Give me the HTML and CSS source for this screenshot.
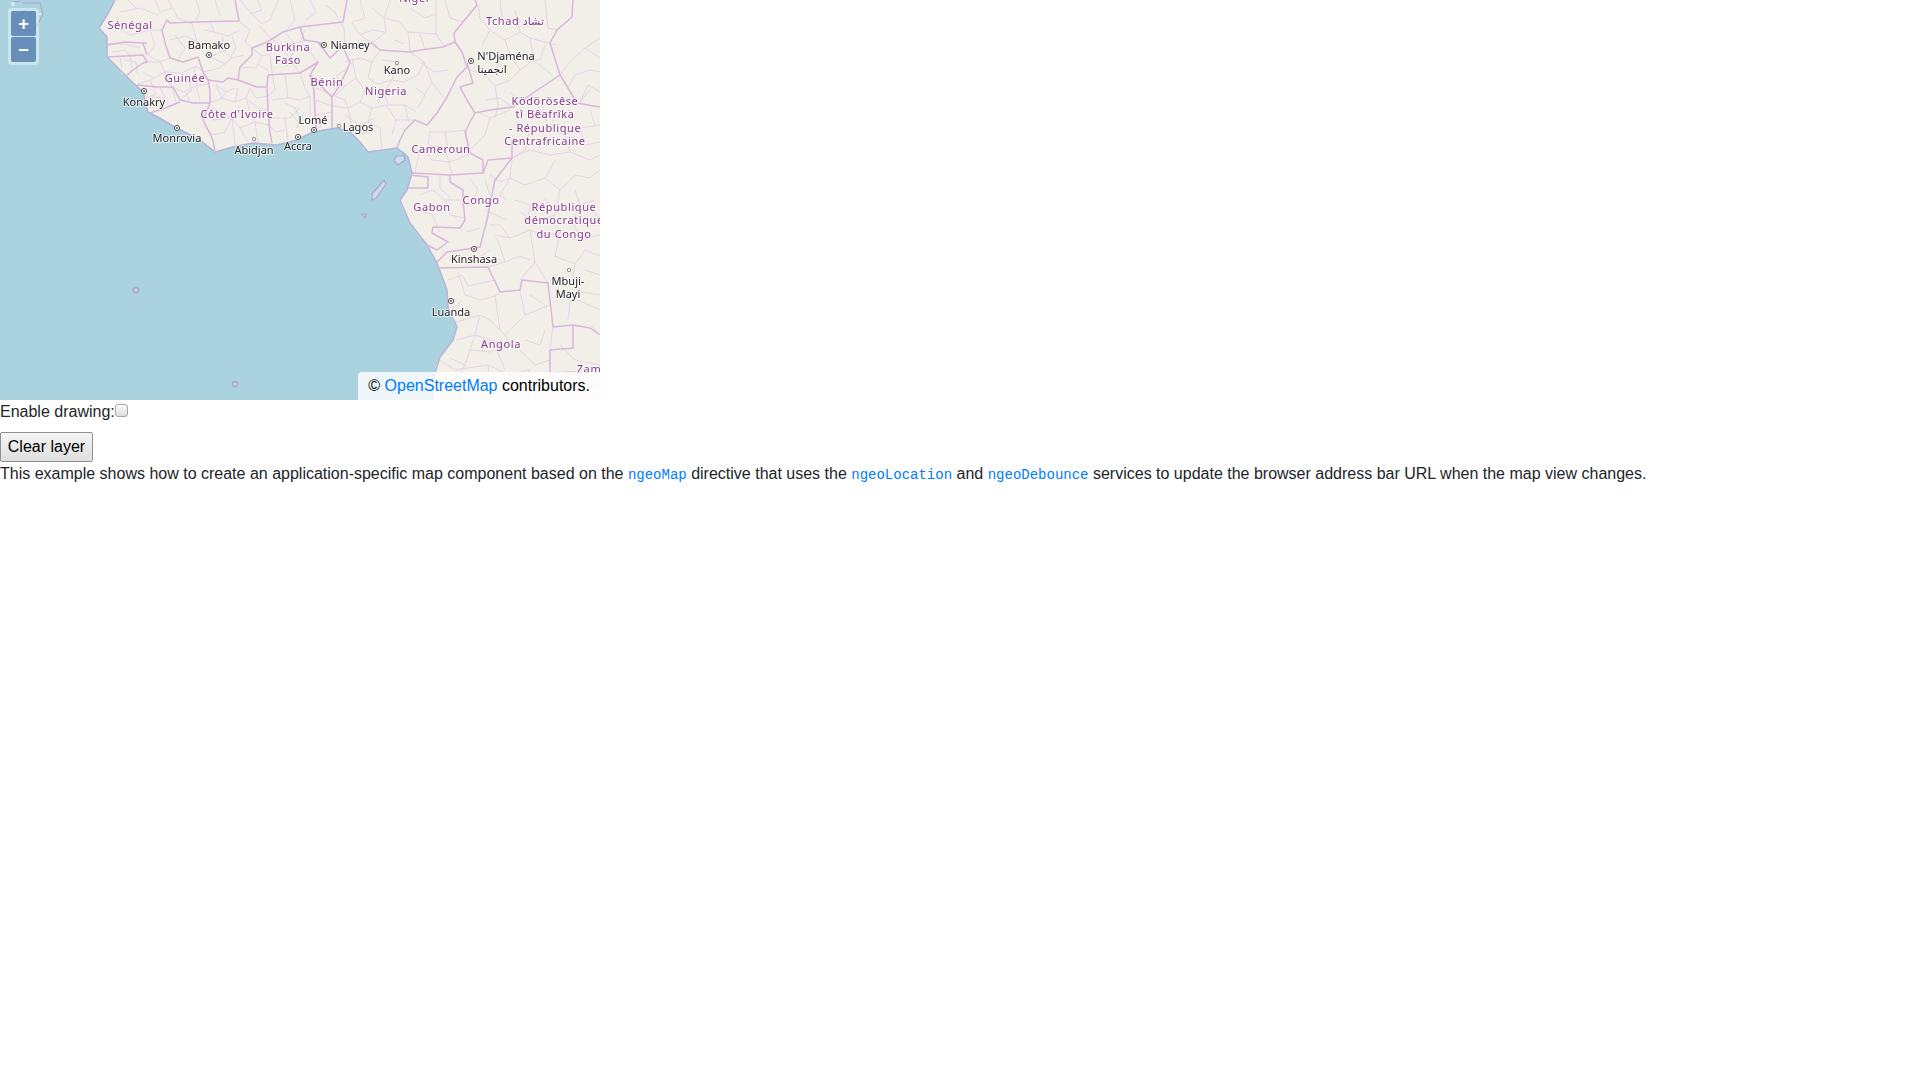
FILE: index.html
```html
<!DOCTYPE html>
<html lang="fr">
<head>
<meta charset="utf-8">
<title>Permalink example</title>
<link rel="stylesheet" href="styles.css">
</head>
<body>
<div class="map">
  <svg class="map-canvas" width="600" height="400" viewBox="0 0 600 400" xmlns="http://www.w3.org/2000/svg">
    <rect class="sea" width="600" height="400"/>
    <path class="land" d="M115,0 L110,10 L104,20 L99,28 L107,37 L107,46 L107,57 L113,64 L117,67 L122,74 L128,78 L136,85 L143,92 L146,102 L148,112 L160,117 L170,124 L177,128 L190,134 L200,140 L208,147 L215,152 L224,149 L233,147 L243,145 L253,143 L265,144 L277,145 L287,143 L297,140 L305,135 L313,132 L325,129 L337,128 L350,132 L356,137 L360,142 L364,149 L368,152 L380,151 L397,148 L404,152 L408,157 L410,165 L412,173 L409,182 L407,190 L400,200 L402,207 L410,223 L418,235 L427,245 L433,255 L437,263 L442,277 L447,290 L448,307 L452,317 L457,327 L455,335 L453,340 L446,349 L440,357 L436,366 L435,373 L432,400 L600,400 L600,0 Z"/>
    <path class="coast-halo" d="M115,0 L110,10 L104,20 L99,28 L107,37 L107,57 L117,67 L128,78 L143,92 L148,112 L177,128 L200,140 L215,152 L233,147 L253,143 L277,145 L297,140 L313,132 L337,128 L350,132 L360,142 L368,152 L397,148 L408,157 L412,173 L407,190 L400,200 L410,223 L427,245 L437,263 L447,290 L448,307 L457,327 L453,340 L440,357 L435,373 L432,400"/>

    <g class="minor">
      <path d="M168,0 L178,18 M120,12 L140,8 L158,15 M128,0 L136,8 M115,26 L130,35 L150,30 L162,30"/>
      <path d="M196,0 L200,12 L196,20 M210,22 L214,32 L228,36 L240,30 M170,40 L186,36 L197,42 L204,54 M204,30 L214,32 M222,36 L226,50 L212,56 L204,55"/>
      <path d="M240,0 L252,14 L262,24 L270,20 L278,0 M240,22 L250,30 L245,42 L252,48 M260,26 L270,38 M290,0 L295,20 L285,32"/>
      <path d="M210,57 L225,64 L232,58 L222,50 M203,72 L220,68 L232,58 M150,30 L155,45 L148,55 L160,62 L170,58"/>
      <path d="M145,62 L160,62 L165,72 L150,80 L138,84 M165,72 L182,73 L196,66 L204,72 M143,73 L155,78 M165,72 L172,87 M188,80 L192,90 L180,100"/>
      <path d="M108,44 L125,44 L140,48 M112,52 L125,50 L130,56 L143,55 M120,57 L122,68 M130,56 L132,68"/>
      <path d="M173,87 L184,92 L196,86 L208,84 M186,92 L190,102 M160,88 L165,98 L158,110 M150,97 L165,98"/>
      <path d="M210,103 L222,98 L235,102 L246,98 L258,108 L268,110 M222,98 L216,85 M235,102 L238,88 M246,98 L250,88 M212,120 L232,118 L240,128 L255,122 L268,125 M232,118 L235,145 M255,122 L258,142 M204,125 L213,135 L225,132 L232,118"/>
      <path d="M272,72 L275,90 L268,96 M285,75 L288,98 L300,100 L310,96 M272,100 L288,98 M270,118 L290,118 L300,108 M300,73 L305,88 L310,96 L310,125 M285,118 L288,140"/>
      <path d="M252,48 L262,56 L270,54 L272,72 M262,56 L256,68 L240,67 M285,32 L295,45 L290,60 L300,73 M305,30 L300,42 L310,52 L318,62 M318,62 L310,67"/>
      <path d="M344,28 L345,48 M352,22 L360,35 L372,43 M390,0 L384,18 L400,22 L408,32 L436,34 L436,0 M384,18 L386,32 L372,43 M408,32 L410,52 M436,34 L444,46"/>
      <path d="M345,62 L360,58 L372,62 L380,50 M352,58 L356,78 L345,86 L335,96 M372,62 L368,78 L378,84 L392,80 L404,82 M392,80 L396,62 L382,60 M404,82 L418,75 L424,62 L410,52 M420,62 L434,72 L448,70 M424,62 L432,82 L444,98"/>
      <path d="M332,106 L348,108 L360,102 L372,108 L386,105 L405,105 L416,112 M348,108 L352,128 M372,108 L368,122 L380,128 L382,150 M386,105 L396,120 L392,135 M405,105 L408,120 M360,102 L365,90 L384,92 L392,80 M335,96 L345,100 L348,108 M360,125 L375,118 M345,115 L360,125 M355,135 L370,132"/>
      <path d="M430,132 L450,132 L466,130 M430,132 L428,145 L445,148 M445,132 L448,148 M466,130 L468,150 M420,145 L432,160 L450,162 L470,154 M445,148 L452,175 M420,150 L415,172"/>
      <path d="M482,45 L490,30 L505,40 L520,32 L530,38 L556,45 M490,30 L480,18 L478,5 M520,32 L515,10 M530,38 L534,60 L520,70 L510,80 L495,86 M470,70 L485,75 L495,86 L498,105 M485,100 L500,98 L512,107 M534,60 L552,75 M500,0 L502,20 L520,20 M545,0 L548,28 L557,30"/>
      <path d="M478,112 L490,118 L510,110 M490,118 L485,135 L470,150 M515,122 L530,130 L550,128 M530,130 L525,150 L512,158 M550,128 L565,135 L580,128 L600,125 M565,135 L570,152 L590,160 L600,155 M580,102 L588,85 L600,92 M560,75 L570,62 L585,48 L600,58 M585,48 L600,38 M580,102 L590,90"/>
      <path d="M512,158 L530,150 L550,155 L570,152 M512,160 L510,178 L525,185 L545,178 L555,160 M545,178 L560,190 L575,175 L590,178 L600,170 M510,178 L500,195 L507,200 M560,190 L555,215 L535,222 M490,175 L500,182 L510,178"/>
      <path d="M420,195 L433,190 L445,200 L450,215 L464,218 M415,210 L432,214 L440,232 M445,200 L463,200 M468,202 L482,198 M495,235 L510,238 L530,230 L545,236 L560,232 L575,240 L600,235 M530,230 L535,262 L520,280 M560,232 L555,256 L575,264 L585,250 L600,256 M575,264 L572,280 L582,292 L600,295 M497,238 L505,262 L488,267 M535,262 L548,283 M510,238 L500,225"/>
      <path d="M580,205 L572,222 L580,235 M520,212 L535,222 M590,205 L600,222 M485,210 L507,220 M467,232 L480,228"/>
      <path d="M448,280 L462,275 L468,286 L495,280 L500,292 M458,272 L465,295 L480,300 L495,296 L500,292 M462,300 L450,312 L456,322 L480,315 L490,320 L505,335 L510,345 L520,345 M495,296 L500,330 M520,290 L525,315 L550,305 M525,315 L505,335 M480,315 L475,335 L505,345 M456,340 L475,335 L470,350 L490,352 L510,345 M470,350 L465,365 L450,358 M440,360 L455,370 L488,365 L490,385 L505,400 M520,350 L535,365 L550,360 M488,365 L510,375 L530,370 L520,390 L530,400 M550,350 L553,327 M590,325 L600,335 M440,400 L455,380 L465,365"/>
      <path d="M178,18 L192,24 M155,0 L160,12 L172,8 M215,0 L220,16 M258,0 L262,10 L250,14 M310,0 L316,12 L306,20 M325,5 L335,12 L340,22 M360,0 L365,18 L352,22 M372,8 L384,18 M410,8 L425,18 L436,14 M445,0 L450,18 L463,22"/>
      <path d="M175,35 L185,48 L178,60 M192,24 L197,42 M232,36 L236,48 L230,58 M244,55 L232,58 M270,38 L282,46 L290,60 M282,46 L300,42 M258,64 L268,70 M276,56 L286,66 L296,60"/>
      <path d="M124,60 L136,62 L138,75 M150,80 L156,94 L146,98 M172,87 L176,102 M196,86 L200,100 M196,66 L192,80 M204,72 L196,86 M216,85 L226,92 L235,88 M226,92 L222,98 M250,88 L256,98 L268,96 M240,128 L248,142 M212,108 L222,112 L232,118 M246,98 L250,112 L255,122 M268,125 L276,132 L285,130"/>
      <path d="M316,88 L326,92 M316,100 L332,106 M316,115 L332,112 M320,128 L324,115 M345,70 L336,76 L345,86 M356,78 L365,90 M384,92 L388,104 M416,88 L425,95 L418,108 M432,82 L424,95 M395,120 L408,120 L415,120 M360,35 L372,30 L384,32 M395,40 L404,44 M420,34 L425,50 M340,22 L344,28"/>
      <path d="M490,50 L500,60 L495,72 M505,40 L510,55 L520,70 M545,45 L540,60 L534,60 M498,105 L495,118 M510,92 L520,100 M532,95 L540,110 L550,128 M568,88 L575,75 L590,70 L600,72 M550,128 L556,115 L570,110 M590,110 L595,125 M580,128 L585,145 L600,142 M440,175 L440,188 L450,198 M470,178 L478,190 L470,205 M485,180 L490,195"/>
      <path d="M515,200 L530,205 L528,220 M545,198 L550,208 M575,190 L580,205 L595,200 M490,225 L500,225 M465,262 L478,258 L490,250 M505,262 L520,256 L530,260 M585,270 L600,275 M555,290 L570,300 L568,320 M578,300 L600,310 M530,295 L545,305 M525,340 L540,345 L545,330 M560,345 L575,360 L600,365 M558,380 L575,392 L600,385 M470,385 L490,385 M540,378 L535,400 M505,370 L495,345"/>
    </g>

    <g class="major">
      <path d="M235,0 L239,21 L195,22 L170,23 L167,20 L162,30 L165,43 L170,58 L183,62 L198,57 L203,72 L208,80 L210,90 L210,103 L203,120 L208,130 L213,140 L215,152"/>
      <path d="M208,80 L223,82 L228,78 L238,80 L240,67 L252,55 L252,48 L267,42 L283,32 L300,27 L343,22 L347,0"/>
      <path d="M238,80 L257,87 L267,87 L268,110 L270,133 L272,143 M268,75 L267,87 M268,75 L300,73 L310,67 L318,62 L310,75 L314,90 L316,132 M300,27 L304,40 L318,42 L330,58 L342,47 M318,42 L324,45"/>
      <path d="M310,75 L332,97 L332,128 M332,97 L340,85 L350,63 L343,47 L356,47 L372,43 L380,50 L410,52 L420,50 L443,47 L455,42 L454,33 L463,22 L477,5 L475,0"/>
      <path d="M455,42 L462,52 L467,67 L457,77 L447,97 L437,113 L427,125 L415,120 L405,130 L400,140 L397,148"/>
      <path d="M467,63 L473,83 L460,87 L467,100 L475,113 L470,122 L465,132 L470,153 L483,160 L483,173 L450,175 L412,173 M483,173 L488,160 L512,158 L512,140 M475,113 L490,110 L513,107 L533,93 L560,75 L568,88 L577,103 L600,107 M573,0 L572,17 L557,30 L550,43 L560,75"/>
      <path d="M410,175 L428,177 L428,188 L408,188 M450,175 L450,182 L463,190 L463,200 L465,220 L460,228 L433,227 L432,233 L448,242 L437,250 L427,245 M512,158 L495,180 L487,220 L480,247 L460,250 L447,252 L437,262 M438,268 L488,267 L500,292 L520,290 L522,280 L548,283 L553,327 L573,325 L573,348 L550,350 L550,373 L575,372 L580,380 M573,325 L590,328 L600,335"/>
      <path d="M143,43 L125,42 L107,45 M107,57 L125,56 L143,55 L147,62 L143,63 L133,70 L125,77 M147,43 L143,43 L147,55 M137,85 L157,87 L173,87 L180,100 L193,103 L210,103 M150,113 L165,108 L180,102"/>
    </g>

    <path class="river" d="M285,103 L295,108 L300,118 L297,128 M304,112 L300,122 M290,112 L298,122"/>
    <path class="isle" d="M396,156 L404,156 L405,160 L398,165 L394,161 Z"/>
    <path class="isle" d="M384,180 L386,184 L376,198 L372,200 L372,194 Z"/>
    <path class="isle" d="M362,214 L366,214 L365,218 Z"/>
    <circle class="dot-ring" cx="136" cy="290" r="2.6"/>
    <circle class="dot-ring" cx="235" cy="384" r="2.6"/>
    <path class="maritime" d="M12,2 L20,1 M22,3 L40,3 L43,14 L38,24 L34,30 L18,31 L17,18 L28,8"/>
    <circle class="isle-spot" cx="13" cy="4" r="2"/>
    <circle class="isle-spot" cx="40" cy="14" r="1.5"/>

    <g class="cities">
      <circle class="city" cx="209" cy="55" r="2.6"/><circle class="core" cx="209" cy="55" r="0.9"/>
      <circle class="city" cx="144" cy="91" r="2.6"/><circle class="core" cx="144" cy="91" r="0.9"/>
      <circle class="city" cx="177" cy="128" r="2.6"/><circle class="core" cx="177" cy="128" r="0.9"/>
      <circle class="town" cx="254" cy="139" r="1.7"/>
      <circle class="city" cx="298" cy="137" r="2.6"/><circle class="core" cx="298" cy="137" r="0.9"/>
      <circle class="city" cx="314" cy="130" r="2.6"/><circle class="core" cx="314" cy="130" r="0.9"/>
      <circle class="town" cx="339" cy="126" r="1.7"/>
      <circle class="city" cx="324" cy="45" r="2.6"/><circle class="core" cx="324" cy="45" r="0.9"/>
      <circle class="town" cx="397" cy="63" r="1.7"/>
      <circle class="city" cx="471" cy="61" r="2.6"/><circle class="core" cx="471" cy="61" r="0.9"/>
      <circle class="city" cx="474" cy="249" r="2.6"/><circle class="core" cx="474" cy="249" r="0.9"/>
      <circle class="town" cx="569" cy="270" r="1.7"/>
      <circle class="city" cx="451" cy="301" r="2.6"/><circle class="core" cx="451" cy="301" r="0.9"/>
    </g>

    <g class="country">
      <text x="130" y="29">Sénégal</text>
      <text x="288" y="51">Burkina</text>
      <text x="288" y="64">Faso</text>
      <text x="185" y="82">Guinée</text>
      <text x="237" y="118">Côte d'Ivoire</text>
      <text x="327" y="86">Bénin</text>
      <text x="386" y="95">Nigeria</text>
      <text x="415" y="2">Niger</text>
      <text x="515" y="25">Tchad تشاد</text>
      <text x="545" y="105">Ködörösêse</text>
      <text x="545" y="118">tî Bêafrîka</text>
      <text x="545" y="132">- République</text>
      <text x="545" y="145">Centrafricaine</text>
      <text x="441" y="153">Cameroun</text>
      <text x="481" y="204">Congo</text>
      <text x="432" y="211">Gabon</text>
      <text x="564" y="211">République</text>
      <text x="564" y="224">démocratique</text>
      <text x="564" y="238">du Congo</text>
      <text x="501" y="348">Angola</text>
      <text x="589" y="373">Zam</text>
    </g>
    <g class="place">
      <text x="209" y="49">Bamako</text>
      <text x="144" y="106">Konakry</text>
      <text x="177" y="142">Monrovia</text>
      <text x="254" y="154">Abidjan</text>
      <text x="298" y="150">Accra</text>
      <text x="313" y="124">Lomé</text>
      <text x="358" y="131">Lagos</text>
      <text x="350" y="49">Niamey</text>
      <text x="397" y="74">Kano</text>
      <text x="506" y="60">N'Djaména</text>
      <text x="492" y="73">انجمينا</text>
      <text x="474" y="263">Kinshasa</text>
      <text x="568" y="285">Mbuji-</text>
      <text x="568" y="298">Mayi</text>
      <text x="451" y="316">Luanda</text>
    </g>
  </svg>
  <div class="zoom-panel">
    <button class="zoom-btn" type="button">+</button>
    <button class="zoom-btn" type="button">−</button>
  </div>
  <div class="attribution">© <a href="#">OpenStreetMap</a> contributors.</div>
</div>
<label class="draw-label" for="draw">Enable drawing:<input class="draw-check" id="draw" type="checkbox"></label>
<button class="clear-btn" type="button">Clear layer</button>
<p class="desc">This example shows how to create an application-specific map component based on the <a href="#"><code>ngeoMap</code></a> directive that uses the <a href="#"><code>ngeoLocation</code></a> and <a href="#"><code>ngeoDebounce</code></a> services to update the browser address bar URL when the map view changes.</p>
</body>
</html>
```
FILE: styles.css
```css
* { box-sizing: border-box; }
html, body { margin: 0; padding: 0; background: #fff; }
body {
  font-family: "Liberation Sans", Arial, sans-serif;
  font-size: 16px;
  line-height: 1.5;
  color: #212529;
}
a { color: #007bff; text-decoration: none; }
.map { position: relative; width: 600px; height: 400px; overflow: hidden; background: #f2efe9; }
.map-canvas { display: block; filter: blur(0.4px); }
.sea { fill: #aad3df; }
.land { fill: #f2efe9; }
.coast-halo { fill: none; stroke: #b7b2da; stroke-width: 1.5; stroke-linejoin: round; }
.minor path { fill: none; stroke: #e6d3e6; stroke-width: 1; stroke-linejoin: round; }
.major path { fill: none; stroke: #d9b6dc; stroke-width: 1.5; stroke-linejoin: round; }
.river { fill: none; stroke: #bcdbe8; stroke-width: 0.9; }
.isle { fill: #cfdde8; stroke: #a9a6d4; stroke-width: 1.2; }
.dot-ring { fill: #c8d4e4; stroke: #aba4d2; stroke-width: 1.5; }
.maritime { fill: none; stroke: #b09ccf; stroke-width: 0.9; }
.isle-spot { fill: #dbe9ea; }
.city { fill: #fff; stroke: #555; stroke-width: 1; }
.core { fill: #444; }
.town { fill: #fff; stroke: #777; stroke-width: 0.8; }
.country text, .place text {
  font-family: "Noto Sans", "DejaVu Sans", sans-serif;
  font-size: 11px;
  text-anchor: middle;
  paint-order: stroke;
  stroke: rgba(255, 255, 255, 0.7);
  stroke-width: 2px;
  stroke-linejoin: round;
}
.country text { fill: #84398a; letter-spacing: 0.6px; }
.place text { fill: #222; }
.zoom-panel {
  position: absolute;
  top: 8px;
  left: 8px;
  padding: 3px;
  border-radius: 4px;
  background: rgba(255, 255, 255, 0.4);
  display: flex;
  flex-direction: column;
  gap: 1px;
}
.zoom-btn {
  display: block;
  width: 25px;
  height: 25px;
  margin: 0;
  padding: 0;
  border: 0;
  border-radius: 2px;
  background: rgba(0, 60, 136, 0.5);
  color: #fff;
  font-family: "Liberation Sans", Arial, sans-serif;
  font-size: 18.24px;
  font-weight: 700;
  line-height: 25px;
  text-align: center;
}
.attribution {
  position: absolute;
  right: 0;
  bottom: 0;
  height: 28px;
  padding: 2px 10px;
  border-radius: 4px 0 0 0;
  background: rgba(255, 255, 255, 0.8);
  color: #000;
  line-height: 24px;
}
.draw-label { display: inline-block; margin-bottom: 8px; vertical-align: top; }
.draw-check {
  appearance: none;
  display: inline-block;
  width: 13px;
  height: 13px;
  margin: 0;
  border: 1px solid #a6a6a6;
  border-radius: 3px;
  background: linear-gradient(#fcfcfc, #dcdcdc);
  vertical-align: 0;
}
.clear-btn {
  display: block;
  width: 93px;
  height: 30px;
  padding: 0 6px;
  border: 1px solid #8f8f8f;
  border-radius: 2px;
  background: linear-gradient(#f6f6f6, #dedede);
  color: #000;
  font: inherit;
  line-height: 28px;
}
.desc { margin: 0 0 16px; }
code { font-family: "Liberation Mono", monospace; font-size: 14px; color: inherit; }
```
